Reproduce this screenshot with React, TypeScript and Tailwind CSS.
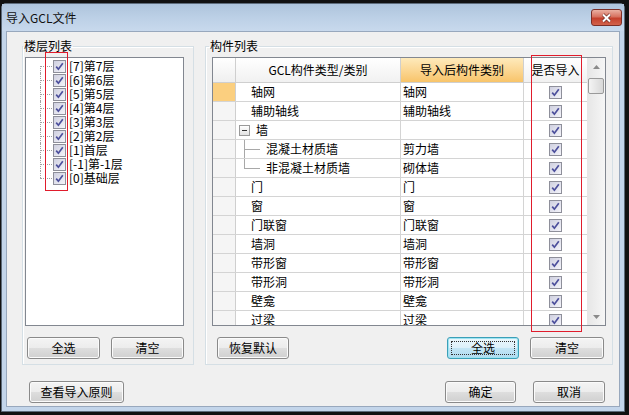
import React from 'react';

const floors = ['[7]第7层', '[6]第6层', '[5]第5层', '[4]第4层', '[3]第3层', '[2]第2层', '[1]首层', '[-1]第-1层', '[0]基础层'];

type Row = { name: string; target: string; kind?: 'group' | 'child' | 'lastChild' };

const rows: Row[] = [
  { name: '轴网', target: '轴网' },
  { name: '辅助轴线', target: '辅助轴线' },
  { name: '墙', target: '', kind: 'group' },
  { name: '混凝土材质墙', target: '剪力墙', kind: 'child' },
  { name: '非混凝土材质墙', target: '砌体墙', kind: 'lastChild' },
  { name: '门', target: '门' },
  { name: '窗', target: '窗' },
  { name: '门联窗', target: '门联窗' },
  { name: '墙洞', target: '墙洞' },
  { name: '带形窗', target: '带形窗' },
  { name: '带形洞', target: '带形洞' },
  { name: '壁龛', target: '壁龛' },
  { name: '过梁', target: '过梁' },
];

function CheckBox() {
  return (
    <span className="inline-flex h-[13px] w-[13px] shrink-0 items-center justify-center border border-[#8e8f9a] bg-gradient-to-br from-[#cfd0e0] to-[#f4f4fa]">
      <svg viewBox="0 0 9 9" className="h-[9px] w-[9px]">
        <path d="M1.2 4.6 L3.4 7.2 L7.8 1.2" fill="none" stroke="#4c4f9c" strokeWidth="1.7" />
      </svg>
    </span>
  );
}

function Button({ label, className = '', focused = false }: { label: string; className?: string; focused?: boolean }) {
  return (
    <button
      className={
        'relative h-[22px] shrink-0 rounded-[3px] border text-[12px] leading-none text-black ' +
        (focused
          ? 'border-[#3c9fb8] bg-[linear-gradient(#ecf7fc,#dcf0fa_50%,#c4e6f6_50%,#b0dbf0)] shadow-[inset_0_0_0_1px_#9de4f2] '
          : 'border-[#8a8a8a] bg-[linear-gradient(#f4f4f4,#ececec_50%,#dedede_50%,#d0d0d0)] shadow-[inset_0_0_0_1px_#fbfbfb] ') +
        className
      }
    >
      {focused && <span className="absolute inset-[3px] border border-dotted border-[#333]" />}
      <span className="relative">{label}</span>
    </button>
  );
}

function Arrow({ up }: { up: boolean }) {
  return (
    <svg viewBox="0 0 7 4" className="h-[4px] w-[7px]">
      <path d={up ? 'M0 4 L3.5 0 L7 4 Z' : 'M0 0 L3.5 4 L7 0 Z'} fill="#8a8a8a" />
    </svg>
  );
}

function NameCell({ row }: { row: Row }) {
  if (row.kind === 'group') {
    return (
      <div className="flex h-full items-center pl-[3px]">
        <span className="flex h-[11px] w-[11px] items-center justify-center border border-[#9a9a9a] bg-gradient-to-b from-white to-[#e2e2e2]">
          <span className="h-px w-[5px] bg-[#333]" />
        </span>
        <span className="ml-[6px]">{row.name}</span>
      </div>
    );
  }
  if (row.kind === 'child' || row.kind === 'lastChild') {
    return (
      <div className="relative flex h-full items-center pl-[30px]">
        <span
          className={
            'absolute left-[8px] top-0 w-px bg-[#a8a8a8] ' + (row.kind === 'child' ? 'h-full' : 'h-1/2')
          }
        />
        <span className="absolute left-[8px] top-1/2 h-px w-[16px] bg-[#a8a8a8]" />
        <span>{row.name}</span>
      </div>
    );
  }
  return <div className="flex h-full items-center pl-[15px]">{row.name}</div>;
}

export default function App() {
  return (
    <div className="relative h-[415px] w-[629px] overflow-hidden bg-[#111] pt-[3px] font-['Noto_Sans_CJK_SC',sans-serif] text-[12px] text-black">
      <div className="ml-[1px] flex h-[409px] w-[624px] flex-col rounded-t-[5px] border border-[#5d6b7a] bg-[#c3d5ea]">
        {/* title bar */}
        <div className="flex h-[27px] shrink-0 items-start justify-between bg-gradient-to-b from-[#aec4dc] via-[#bcd0e6] to-[#c8d9ed] pl-[4px]">
          <span className="mt-[7px] leading-[14px] text-[#111]">导入GCL文件</span>
          <div className="mr-[2px] mt-[5px] flex h-[17px] w-[31px] items-center justify-center rounded-[3px] border border-[#7c2f27] bg-[linear-gradient(#eab0a2,#d7715f_45%,#c4402c_55%,#d2624b)]">
            <svg viewBox="0 0 10 10" className="h-[10px] w-[11px]">
              <path d="M1.5 1.5 L8.5 8.5 M8.5 1.5 L1.5 8.5" stroke="#6a2a22" strokeWidth="3.2" />
              <path d="M1.5 1.5 L8.5 8.5 M8.5 1.5 L1.5 8.5" stroke="#fff" strokeWidth="2" />
            </svg>
          </div>
        </div>

        {/* client area */}
        <div className="mx-[4px] mb-[4px] flex flex-1 flex-col border border-[#98a8bd] bg-[#f0f0f0]">
          <div className="mt-[7px] flex gap-[11px] pl-[15px]">
            {/* 楼层列表 */}
            <fieldset className="w-[172px] border border-[#d5dfe5] pb-[5px] pl-[2px] pr-[9px] pt-[4px] shadow-[inset_1px_1px_0_#fff]">
              <legend className="ml-[-2px] px-px leading-[14px]">楼层列表</legend>
              <div className="h-[269px] w-[159px] border border-[#828790] bg-white pt-px">
                {floors.map((f, i) => (
                  <div key={f} className="flex h-[14px] items-center pl-[14px] leading-[14px]">
                    <span className="relative h-full w-[13px] shrink-0">
                      <span
                        className={
                          'absolute left-0 w-0 border-l border-dotted border-[#a0a0a0] ' +
                          (i === 0 ? 'top-1/2 h-1/2' : i === floors.length - 1 ? 'top-0 h-1/2' : 'top-0 h-full')
                        }
                      />
                      <span className="absolute left-0 top-1/2 w-[12px] border-t border-dotted border-[#a0a0a0]" />
                    </span>
                    <CheckBox />
                    <span className="ml-[3px] whitespace-nowrap">{f}</span>
                  </div>
                ))}
              </div>
              <div className="mt-[11px] flex gap-[11px] pl-[2px]">
                <Button label="全选" className="w-[73px]" />
                <Button label="清空" className="w-[73px]" />
              </div>
            </fieldset>

            {/* 构件列表 */}
            <fieldset className="w-[408px] border border-[#d5dfe5] pb-[5px] pl-[6px] pt-[4px] shadow-[inset_1px_1px_0_#fff]">
              <legend className="ml-[-3px] px-px leading-[14px]">构件列表</legend>
              <div className="flex h-[269px] w-[394px] border border-[#828790] bg-white">
                <div className="flex-1 overflow-hidden">
                  <div className="flex h-[25px] border-b border-[#cfcfcf]">
                    <div className="w-[23px] border-r border-[#cfcfcf] bg-gradient-to-b from-white to-[#efefef]" />
                    <div className="flex w-[165px] items-center justify-center border-r border-[#cfcfcf] bg-gradient-to-b from-white to-[#f1f1f1]">
                      GCL构件类型/类别
                    </div>
                    <div className="flex w-[123px] items-center justify-center border-r border-[#cfcfcf] bg-gradient-to-b from-[#feeabb] to-[#f8c469]">
                      导入后构件类别
                    </div>
                    <div className="flex w-[63px] items-center justify-center bg-gradient-to-b from-white to-[#f1f1f1]">
                      是否导入
                    </div>
                  </div>
                  {rows.map((r, i) => (
                    <div key={r.name} className="flex h-[19px] border-b border-[#d4d4d4]">
                      <div
                        className={
                          'w-[23px] shrink-0 border-r border-[#cfcfcf] ' + (i === 0 ? 'bg-[#fbcf7f]' : 'bg-[#f5f5f5]')
                        }
                      />
                      <div className="w-[165px] shrink-0 border-r border-[#d4d4d4]">
                        <NameCell row={r} />
                      </div>
                      <div className="flex w-[123px] shrink-0 items-center border-r border-[#d4d4d4] pl-[2px]">
                        {r.target}
                      </div>
                      <div className="flex w-[63px] shrink-0 items-center justify-center">
                        <CheckBox />
                      </div>
                    </div>
                  ))}
                </div>
                {/* scrollbar */}
                <div className="flex w-[18px] shrink-0 flex-col items-center bg-gradient-to-r from-[#e6e6e6] to-[#f6f6f6]">
                  <div className="flex h-[17px] w-full items-center justify-center">
                    <Arrow up />
                  </div>
                  <div className="mt-[3px] h-[16px] w-[16px] rounded-[2px] border border-[#9a9a9a] bg-gradient-to-r from-[#f4f4f4] to-[#d8d8d8]" />
                  <div className="flex-1" />
                  <div className="flex h-[17px] w-full items-center justify-center">
                    <Arrow up={false} />
                  </div>
                </div>
              </div>
              <div className="mt-[11px] flex pl-[5px]">
                <Button label="恢复默认" className="w-[72px]" />
                <Button label="全选" className="ml-[158px] w-[72px]" focused />
                <Button label="清空" className="ml-[11px] w-[74px]" />
              </div>
            </fieldset>
          </div>

          <div className="mt-[16px] flex pl-[22px]">
            <Button label="查看导入原则" className="w-[95px]" />
            <Button label="确定" className="ml-[321px] w-[71px]" />
            <Button label="取消" className="ml-[17px] w-[72px]" />
          </div>
        </div>
      </div>

      {/* annotation boxes */}
      <div className="pointer-events-none absolute left-[45px] top-[52px] h-[139px] w-[23px] border-[1.5px] border-[#e01c2c]" />
      <div className="pointer-events-none absolute left-[531px] top-[55px] h-[277px] w-[51px] border-[1.5px] border-[#e01c2c]" />
    </div>
  );
}
